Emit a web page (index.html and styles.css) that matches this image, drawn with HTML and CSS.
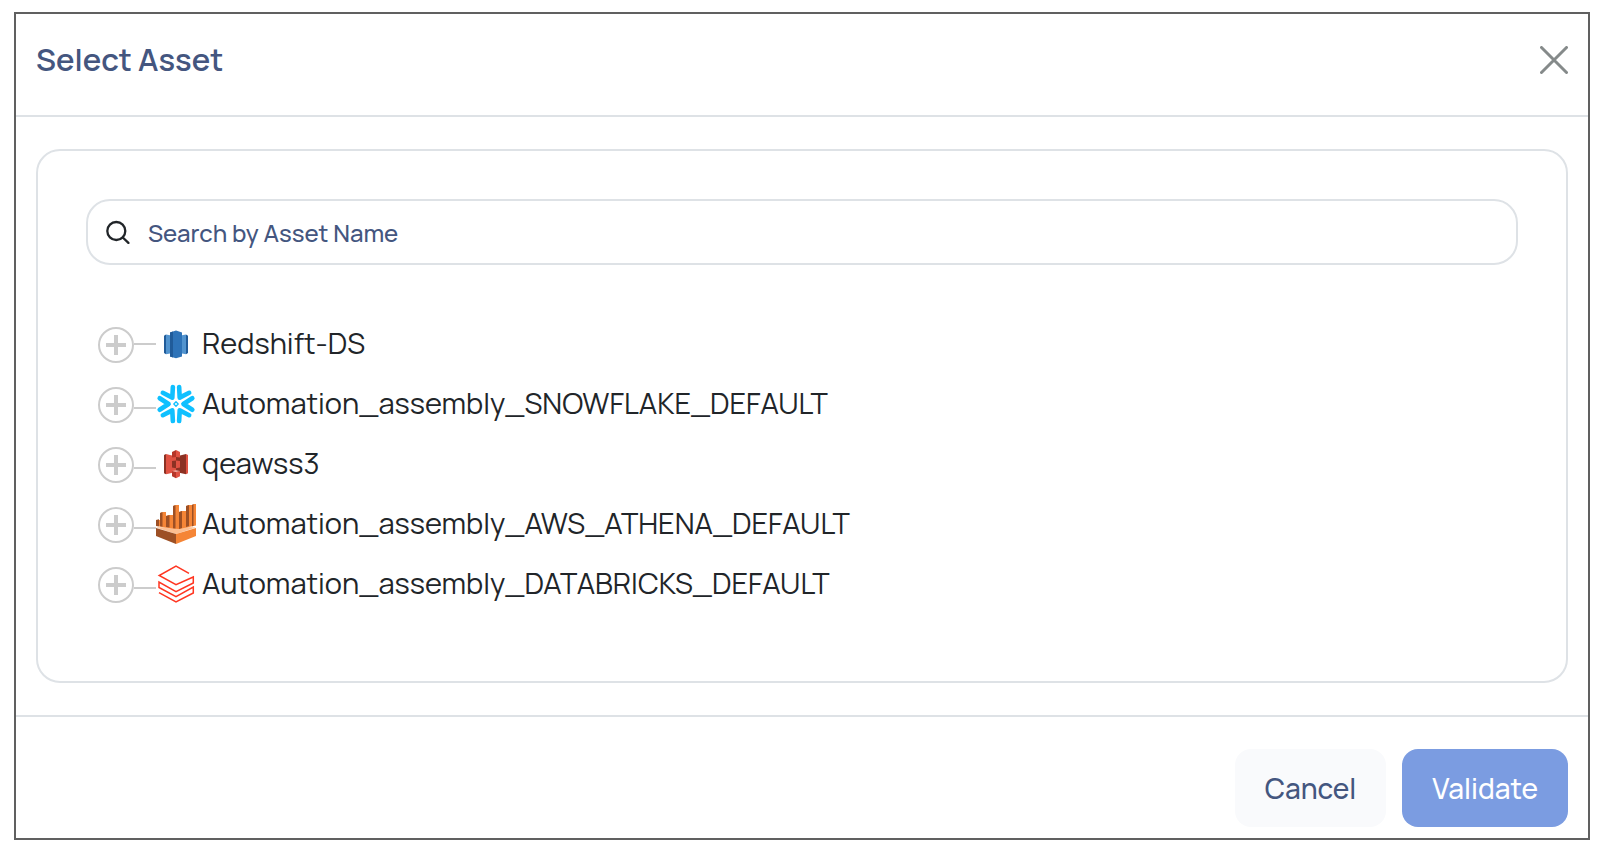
FILE: index.html
```html
<!DOCTYPE html>
<html lang="en">
<head>
<meta charset="utf-8">
<title>Select Asset</title>
<link rel="stylesheet" href="styles.css">
</head>
<body>
<section class="dialog" role="dialog" aria-labelledby="dialog-title">
  <header class="dialog-header">
    <h1 class="dialog-title" id="dialog-title">Select Asset</h1>
    <button class="close" type="button" aria-label="Close">
      <svg viewBox="0 0 28 28" width="28" height="28"><path d="M1.5 1.5l25 25M26.5 1.5l-25 25" fill="none" stroke="#858a8a" stroke-width="3" stroke-linecap="round"/></svg>
    </button>
  </header>
  <div class="dialog-body">
    <div class="card">
      <label class="search">
        <svg viewBox="0 0 24 24" width="24" height="24" aria-hidden="true"><g fill="none" stroke="#212529" stroke-width="2.3" stroke-linecap="round"><circle cx="10.300" cy="11" r="9"/><path d="M16.800 17.500l5.600 5.400"/></g></svg>
        <input class="search-input" type="text" placeholder="Search by Asset Name" aria-label="Search by Asset Name">
      </label>
      <ul class="tree">
        <li class="node">
          <button class="toggle" type="button" aria-label="Expand Redshift-DS"></button>
          <span class="branch branch-first"></span>
          <svg class="icon" viewBox="0 0 40 40" aria-hidden="true">
            <path d="M8 11.700l2-1.200v19.800l-2-1.200z" fill="#205b99"/><path d="M10 10.500l4 .8v18.200l-4 .8z" fill="#5294cf"/>
            <path d="M32 11.700l-2-1.200v19.800l2-1.200z" fill="#205b99"/><path d="M30 10.500l-4 .8v18.200l4 .8z" fill="#5294cf"/>
            <path d="M20 6.500l6 2v24l-6 1.800-6-1.800v-24z" fill="#2e73b8"/>
            <path d="M14 8.500l3-1v26l-3-1z" fill="#205b99"/>
          </svg>
          <span class="label">Redshift-DS</span>
        </li>
        <li class="node">
          <button class="toggle" type="button" aria-label="Expand Automation_assembly_SNOWFLAKE_DEFAULT"></button>
          <span class="branch"></span>
          <svg class="icon" viewBox="-20 -20 40 40" aria-hidden="true">
            <g fill="none" stroke="#0fc0ff" stroke-width="4.600" stroke-linecap="round" stroke-linejoin="round">
              <path id="arm" d="M16.300 -5.800L7.400 0L16.300 5.800"/>
              <use href="#arm" transform="rotate(60)"/><use href="#arm" transform="rotate(120)"/><use href="#arm" transform="rotate(180)"/><use href="#arm" transform="rotate(240)"/><use href="#arm" transform="rotate(300)"/>
            </g>
            <path d="M0-4L4 0L0 4L-4 0z" fill="#fff"/><path d="M0-2.200L2.200 0L0 2.200L-2.200 0z" fill="none" stroke="#0fc0ff" stroke-width="1.300" stroke-linejoin="round"/>
          </svg>
          <span class="label">Automation_assembly_SNOWFLAKE_DEFAULT</span>
        </li>
        <li class="node">
          <button class="toggle" type="button" aria-label="Expand qeawss3"></button>
          <span class="branch"></span>
          <svg class="icon" viewBox="0 0 40 40" aria-hidden="true">
            <path d="M8 11l2-1v20.300l-2-1z" fill="#8c3123"/><path d="M10 10l10 2.500v15.500l-10 2.300z" fill="#e05243"/>
            <path d="M32 11l-2-1v20.300l2-1z" fill="#e05243"/><path d="M30 10l-10 2.500v15.500l10 2.300z" fill="#8c3123"/>
            <path d="M16 8l4-2v7l-4 .6z" fill="#b53629"/><path d="M24 8l-4-2v7l4 .6z" fill="#e05243"/>
            <path d="M16 17l4-.6v7.800l-4-.6z" fill="#8c3123"/><path d="M24 17l-4-.6v7.800l4-.6z" fill="#e05243"/>
            <path d="M16 27l4 .8v6.500l-4-2z" fill="#b53629"/><path d="M24 27l-4 .8v6.500l4-2z" fill="#e05243"/><path d="M16 27l4-.8 4 .8-4 1z" fill="#f2b0a9"/>
          </svg>
          <span class="label">qeawss3</span>
        </li>
        <li class="node">
          <button class="toggle" type="button" aria-label="Expand Automation_assembly_AWS_ATHENA_DEFAULT"></button>
          <span class="branch"></span>
          <svg class="icon" viewBox="0 0 40 40" aria-hidden="true">
            <path d="M0 23.500l20-1 20 1-20 6.500z" fill="#fcbf92"/>
            <path d="M0 24l20 6v10L0 32z" fill="#9d5025"/><path d="M40 24l-20 6v10l20-8z" fill="#f58536"/>
            <path d="M0 16h4V9l3-1h3v4l3-1h4V2l3-1h3v7l3-1h4V2l3-1h3l2-1h2v21.500L23 25l-6-.5L0 22z" fill="#f58536"/>
            <path d="M0 16l3-.7v7L0 22zM4 9l2.500-1v14.700L4 22.300zM10 12l3.500-1v12.500L10 23zM17 2l2.500-1v23.500l-2.500-.3zM23 8l3-1v17l-3 1zM30 2l3-1v21l-3 1zM36 1l1.500-1v22l-1.500.3z" fill="#9d5025"/>
          </svg>
          <span class="label">Automation_assembly_AWS_ATHENA_DEFAULT</span>
        </li>
        <li class="node">
          <button class="toggle" type="button" aria-label="Expand Automation_assembly_DATABRICKS_DEFAULT"></button>
          <span class="branch"></span>
          <svg class="icon" viewBox="0 0 40 40" aria-hidden="true">
            <path d="M33 9.300L20 2L3.200 11.500L20 20.700L37.300 13V19L20 27.700L3 18V23.500L20 32.700L37.300 23V29L20 38L3 28.700" fill="none" stroke="#ff3621" stroke-width="1.500"/>
          </svg>
          <span class="label">Automation_assembly_DATABRICKS_DEFAULT</span>
        </li>
      </ul>
    </div>
  </div>
  <footer class="dialog-footer">
    <button class="btn btn-cancel" type="button">Cancel</button>
    <button class="btn btn-validate" type="button">Validate</button>
  </footer>
</section>
</body>
</html>
```
FILE: styles.css
```css
*{box-sizing:border-box}
body{margin:0;padding:12px 12px 14px 14px;background:#fff;color:#212529;font-family:Manrope,Inter,"Liberation Sans",sans-serif}
button,input{font:inherit}
button{border:0;padding:0;cursor:pointer}
.dialog{border:2px solid #606060;background:#fff}
.dialog-header{display:flex;align-items:center;justify-content:space-between;padding:25px 20px 34px;border-bottom:2px solid #dee2e6}
.dialog-title{margin:0;padding-bottom:2px;font-size:31px;line-height:40px;font-weight:600;color:#44567f}
.close{display:flex;background:none}
.dialog-body{padding:32px 20px}
.card{padding:48px 48px 67px;border:2px solid #dee2e6;border-radius:24px}
.search{display:flex;align-items:center;gap:18px;height:66px;padding:0 18px;border:2px solid #dee2e6;border-radius:24px}
.search svg{flex:none}
.search-input{flex:1;min-width:0;border:0;padding:2px 0 0;outline:0;background:none;font-size:24px;line-height:32px;font-weight:500;color:#44567f}
.search-input::placeholder{color:#44567f;opacity:1}
.tree{list-style:none;margin:49px 0 0;padding:0 0 0 12px}
.node{display:flex;align-items:center;height:60px}
.toggle{flex:none;width:36px;height:36px;margin-top:2px;border:2px solid #ccc;border-radius:50%;background:linear-gradient(#ccc,#ccc) center/20px 4px no-repeat,linear-gradient(#ccc,#ccc) center/4px 20px no-repeat}
.branch{flex:none;width:22px;height:2px;margin-top:8px;background:#ccc}
.branch-first{margin-top:0}
.icon{flex:none;width:40px;height:40px}
.label{margin-left:6px;padding-bottom:2px;font-size:29px;line-height:40px}
.dialog-footer{display:flex;justify-content:flex-end;gap:16px;padding:32px 20px 11px;border-top:2px solid #dee2e6}
.btn{padding:19px 30px;border-radius:16px;font-size:28px;line-height:40px;font-weight:500}
.btn-cancel{background:#f9fafc;color:#44567f}
.btn-validate{background:#7b9ce1;color:#fff}
```
